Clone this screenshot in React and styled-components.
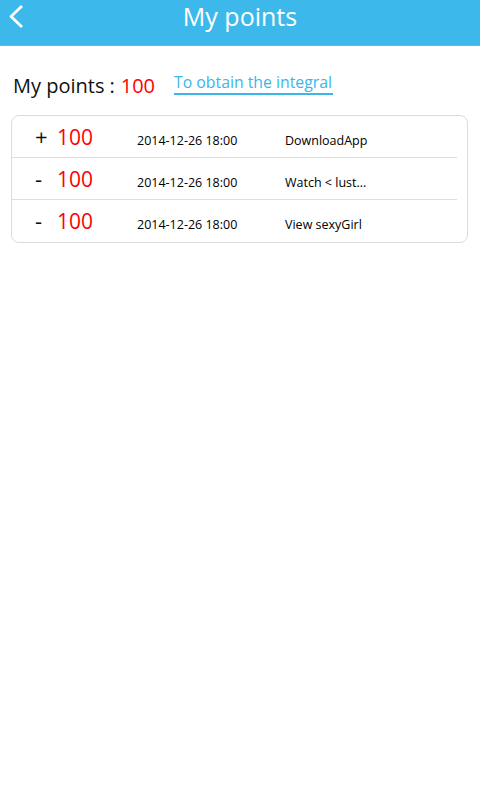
import React from "react";
import styled, { createGlobalStyle } from "styled-components";

const GlobalStyle = createGlobalStyle`
  html, body {
    margin: 0;
    padding: 0;
    background: #ffffff;
  }
  body {
    font-family: "Open Sans", "Noto Sans", sans-serif;
    color: #111111;
  }
`;

const Page = styled.div`
  width: 480px;
  min-height: 800px;
  background: #ffffff;
`;

const Header = styled.header`
  display: grid;
  grid-template-columns: 46px 1fr 46px;
  box-sizing: border-box;
  height: 46px;
  background-color: #3cb9ea;
  border-bottom: 1px solid #4cc2f0;
`;

const BackButton = styled.button`
  display: flex;
  align-items: flex-start;
  padding: 4px 0 0 9px;
  margin: 0;
  border: none;
  background: transparent;
  cursor: pointer;
`;

const Title = styled.h1`
  margin: 0;
  font-size: 25px;
  font-weight: 400;
  line-height: 33px;
  color: #ffffff;
  text-align: center;
`;

const Summary = styled.div`
  display: flex;
  align-items: flex-start;
  padding: 0 13px;
  margin-top: 26px;
`;

const PointsLabel = styled.div`
  display: flex;
  font-size: 20px;
  line-height: 27px;
  color: #111111;
`;

const Colon = styled.span`
  margin: 0 6px 0 5px;
`;

const Red = styled.span`
  color: #ff0000;
`;

const ObtainLink = styled.a`
  margin: -1px 0 0 19px;
  font-size: 15.8px;
  line-height: 22px;
  color: #3ab7e9;
  text-decoration: none;
  border-bottom: 2px solid #3ab7e9;
  padding: 0 1px 0 0;
`;

const Card = styled.div`
  margin: 16px 12px 0 11px;
  border: 1px solid #dcdcdc;
  border-radius: 8px;
  overflow: hidden;
`;

const Row = styled.div`
  display: flex;
  align-items: baseline;
  box-sizing: border-box;
  height: 42px;
  padding: 5px 0 0 23px;
  margin-right: 10px;
  border-bottom: ${({ last }) => (last ? "none" : "1px solid #dedede")};
`;

const Sign = styled.span`
  width: 22px;
  font-size: 22px;
  color: #111111;
`;

const Amount = styled.span`
  width: 80px;
  font-size: 21px;
  color: #ff0000;
`;

const Date = styled.span`
  width: 148px;
  font-size: 12.5px;
  font-weight: 500;
  color: #000000;
`;

const Desc = styled.span`
  font-size: 12.5px;
  font-weight: 500;
  color: #000000;
  white-space: nowrap;
`;

const records = [
  { sign: "+", amount: 100, date: "2014-12-26 18:00", desc: "DownloadApp" },
  { sign: "-", amount: 100, date: "2014-12-26 18:00", desc: "Watch < lust..." },
  { sign: "-", amount: 100, date: "2014-12-26 18:00", desc: "View sexyGirl" },
];

const BackIcon = () => (
  <svg width="15" height="25" viewBox="0 0 15 25">
    <polyline
      points="13,2 2,12.5 13,23"
      fill="none"
      stroke="#ffffff"
      strokeWidth="2.8"
      strokeLinejoin="round"
    />
  </svg>
);

const App = () => {
  return (
    <>
      <GlobalStyle />
      <Page>
        <Header>
          <BackButton aria-label="back">
            <BackIcon />
          </BackButton>
          <Title>My points</Title>
          <span />
        </Header>

        <Summary>
          <PointsLabel>
            My points
            <Colon>:</Colon>
            <Red>100</Red>
          </PointsLabel>
          <ObtainLink href="#">To obtain the integral</ObtainLink>
        </Summary>

        <Card>
          {records.map((r, i) => (
            <Row key={i} last={i === records.length - 1}>
              <Sign>{r.sign}</Sign>
              <Amount>{r.amount}</Amount>
              <Date>{r.date}</Date>
              <Desc>{r.desc}</Desc>
            </Row>
          ))}
        </Card>
      </Page>
    </>
  );
};

export default App;
